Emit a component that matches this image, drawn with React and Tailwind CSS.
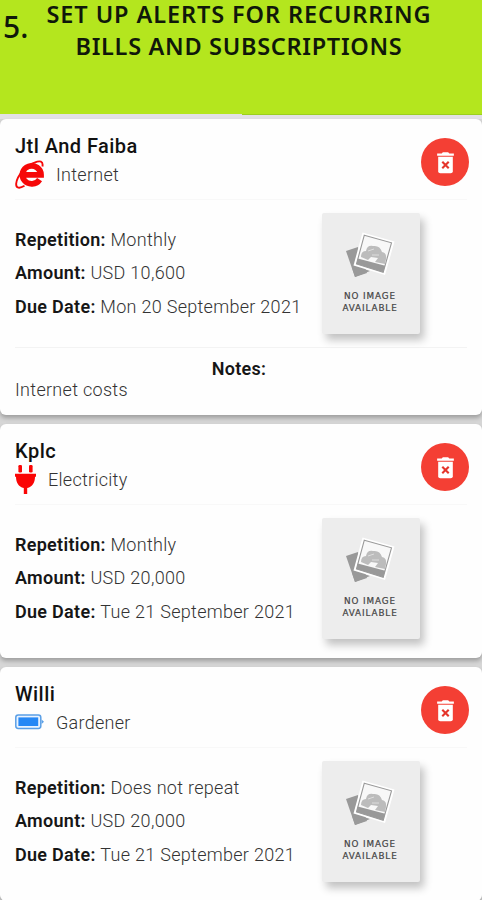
import React from "react";

const bills = [
  { name: "Jtl And Faiba", category: "Internet", icon: "internet", repetition: "Monthly", amount: "USD 10,600", due: "Mon 20 September 2021", notes: "Internet costs" },
  { name: "Kplc", category: "Electricity", icon: "plug", repetition: "Monthly", amount: "USD 20,000", due: "Tue 21 September 2021" },
  { name: "Willi", category: "Gardener", icon: "battery", repetition: "Does not repeat", amount: "USD 20,000", due: "Tue 21 September 2021" },
];

function CategoryIcon({ kind }) {
  if (kind === "internet") {
    return (
      <svg className="mr-[12px] size-[29px]" viewBox="0 0 29 29" fill="none">
        <path d="M8 14.8H26A9.3 9 0 1 0 24.6 19.6" stroke="#f60808" strokeWidth="5.8" />
        <path d="M27.4 6.5C28.5 1 25 .4 19.5 2.6C11.5 5 1.8 16 1.2 23.5C.8 28.4 4.5 28.8 9.5 25.8" stroke="#f60808" strokeWidth="1.9" />
      </svg>
    );
  }
  if (kind === "plug") {
    return (
      <svg className="mr-[12px] h-[29px] w-[21px]" viewBox="0 0 21 29" fill="#fa0505">
        <rect x="3.4" y="0" width="3.6" height="7.4" rx="1.2" />
        <rect x="14" y="0" width="3.6" height="7.4" rx="1.2" />
        <path d="M0 8.8H21V11.8H20C20 17.5 17.5 22 12.2 23V29H8.8V23C3.5 22 1 17.5 1 11.8H0Z" />
      </svg>
    );
  }
  return (
    <svg className="mr-[12px] h-[16px] w-[29px]" viewBox="0 0 29 16">
      <rect x="0.8" y="1" width="25" height="13.4" rx="2.4" fill="#e9f3ff" stroke="#5a9fe6" strokeWidth="1.5" />
      <rect x="3.4" y="3.4" width="19.8" height="8.6" fill="#2688f5" />
      <path d="M26.6 5.4L29 7.7L26.6 10Z" fill="#5a9fe6" />
    </svg>
  );
}

function DeleteButton() {
  return (
    <button aria-label="Delete" className="flex size-[48px] shrink-0 items-center justify-center rounded-full bg-[#f43f34]">
      <svg className="h-[23px] w-[19px]" viewBox="0 0 20 24">
        <path d="M1.2 2.6H6L7.2 1.2H12.8L14 2.6H18.8V4.9H1.2Z" fill="#fff" />
        <path d="M2.3 6H17.7V21.2Q17.7 23.4 15.5 23.4H4.5Q2.3 23.4 2.3 21.2Z" fill="#fff" />
        <path d="M6.6 11.2L13.4 18M13.4 11.2L6.6 18" stroke="#e5352b" strokeWidth="2.2" />
      </svg>
    </button>
  );
}

function Placeholder() {
  return (
    <div className="ml-[307px] flex h-[121px] w-[98px] flex-col items-center rounded-[2px] bg-[#ededed] pt-[18px] shadow-[4px_6px_9px_rgba(0,0,0,0.24)]">
      <svg className="mr-[2px] h-[50px] w-[52px]" viewBox="0 0 52 50">
        <path d="M2 20L14 16L23 42L11 46Z" fill="#999" />
        <path d="M11 35L26 40L11 46L8 37Z" fill="#999" />
        <path d="M18.5 1.5L50.5 10.5L41 44L9.5 34.5Z" fill="#fff" />
        <path d="M20.3 4.2L47.5 11.8L39.2 41.2L12.5 33Z" fill="#f8f8f8" stroke="#999" strokeWidth="1.1" />
        <path d="M13.8 27.5L41.2 34.7L39.2 41.2L12.5 33Z" fill="#999" />
        <path d="M17 26Q17 20 22 20Q23 14 29 15Q36 14 38 21Q43 22 42 28L41 33L31 31L34 27L27 26L24 29Z" fill="#bcbcbc" />
        <path d="M24 20L30 18M28 24L35 24" stroke="#ddd" />
      </svg>
      <div className="mt-[9px] mr-[2px] text-center font-['DejaVu_Sans',sans-serif] text-[8.8px] leading-[12px] tracking-[0.9px] text-[#444] [-webkit-text-stroke:0.2px_#444]">
        NO IMAGE<br />AVAILABLE
      </div>
    </div>
  );
}

function Field({ label, value }) {
  return (
    <div className="h-[33.4px] whitespace-nowrap text-[18px] leading-[26px] tracking-[0.29px] text-[#333]">
      <span className="font-semibold text-[#161616]">{label}:</span> <span className="font-light">{value}</span>
    </div>
  );
}

function BillCard({ bill }) {
  return (
    <article className={`shrink-0 rounded-[6px] bg-[#fefefe] px-[15px] shadow-[0_3px_4px_rgba(0,0,0,0.26)] ${bill.notes ? "h-[296px]" : "h-[234px]"}`}>
      <header className="flex h-[81px] justify-between border-b border-[#f8f8f8] pt-[14px]">
        <div>
          <h2 className="h-[26px] text-[20px] leading-[26px] font-medium tracking-[0.45px] text-[#111]">{bill.name}</h2>
          <div className="flex h-[30px] items-center text-[18px] font-light tracking-[0.28px] text-[#333]">
            <CategoryIcon kind={bill.icon} />
            <span>{bill.category}</span>
          </div>
        </div>
        <div className="mt-[5px] -mr-[2px]"><DeleteButton /></div>
      </header>
      <div className="grid h-[147px] pt-[13px]">
        <div className="col-start-1 row-start-1 pt-[14px]">
          <Field label="Repetition" value={bill.repetition} />
          <Field label="Amount" value={bill.amount} />
          <Field label="Due Date" value={bill.due} />
        </div>
        <div className="col-start-1 row-start-1"><Placeholder /></div>
      </div>
      {bill.notes && (
        <footer className="border-t border-[#f3f3f3] pt-[10px] text-[18px] leading-[21px] tracking-[0.3px]">
          <h3 className="pr-[4px] text-center font-semibold text-[#161616]">Notes:</h3>
          <p className="font-light text-[#333]">{bill.notes}</p>
        </footer>
      )}
    </article>
  );
}

export default function App() {
  return (
    <main className="flex h-[900px] w-[482px] flex-col overflow-hidden bg-[#d6d6d6] font-['Roboto',sans-serif]">
      <header className="flex h-[114px] shrink-0 bg-[#b4e61e] font-['Noto_Sans',sans-serif] text-[#10180a]">
        <div className="w-[46px] pt-[8px] pl-[3px] text-[30px] leading-[38px] font-medium">5.</div>
        <h1 className="w-[386px] text-center text-[23.5px] font-semibold whitespace-nowrap">
          <span className="block leading-[28px] tracking-[0.9px]">SET UP ALERTS FOR RECURRING</span>
          <span className="block pt-px leading-[34px] tracking-[0.7px]">BILLS AND SUBSCRIPTIONS</span>
        </h1>
      </header>
      <div className="flex h-[5px] shrink-0 flex-col bg-[#e3e1e6]">
        <div className="ml-[242px] h-px bg-[#9bcf20]" />
      </div>
      <section className="flex flex-col gap-[9px]">
        {bills.map((bill) => <BillCard key={bill.name} bill={bill} />)}
      </section>
    </main>
  );
}
